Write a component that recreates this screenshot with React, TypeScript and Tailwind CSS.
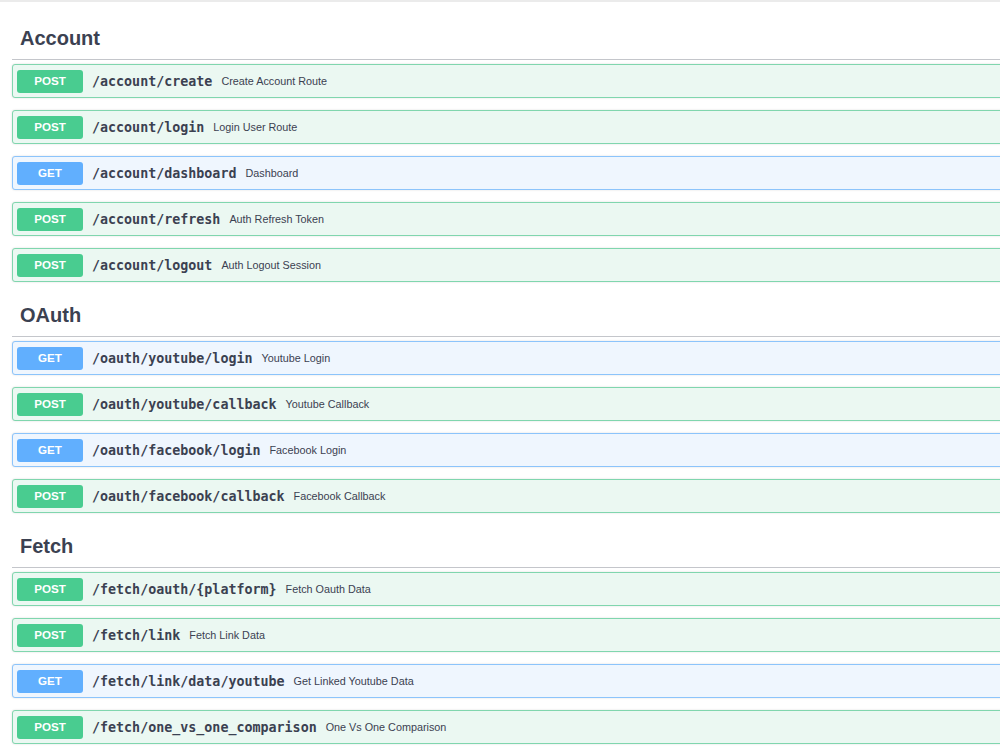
import React from 'react'

type Op = { method: 'GET' | 'POST'; path: string; summary: string }

const sections: { tag: string; ops: Op[] }[] = [
  {
    tag: 'Account',
    ops: [
      { method: 'POST', path: '/account/create', summary: 'Create Account Route' },
      { method: 'POST', path: '/account/login', summary: 'Login User Route' },
      { method: 'GET', path: '/account/dashboard', summary: 'Dashboard' },
      { method: 'POST', path: '/account/refresh', summary: 'Auth Refresh Token' },
      { method: 'POST', path: '/account/logout', summary: 'Auth Logout Session' },
    ],
  },
  {
    tag: 'OAuth',
    ops: [
      { method: 'GET', path: '/oauth/youtube/login', summary: 'Youtube Login' },
      { method: 'POST', path: '/oauth/youtube/callback', summary: 'Youtube Callback' },
      { method: 'GET', path: '/oauth/facebook/login', summary: 'Facebook Login' },
      { method: 'POST', path: '/oauth/facebook/callback', summary: 'Facebook Callback' },
    ],
  },
  {
    tag: 'Fetch',
    ops: [
      { method: 'POST', path: '/fetch/oauth/{platform}', summary: 'Fetch Oauth Data' },
      { method: 'POST', path: '/fetch/link', summary: 'Fetch Link Data' },
      { method: 'GET', path: '/fetch/link/data/youtube', summary: 'Get Linked Youtube Data' },
      { method: 'POST', path: '/fetch/one_vs_one_comparison', summary: 'One Vs One Comparison' },
    ],
  },
]

function OpBlock({ op }: { op: Op }) {
  const isGet = op.method === 'GET'
  return (
    <div
      className={
        isGet
          ? 'mb-[12px] flex h-[34px] items-center rounded-[3px] border border-[#8cc4fb] bg-[#eff6fe] pl-[4px] shadow-[0_0_2px_rgba(0,0,0,0.15)]'
          : 'mb-[12px] flex h-[34px] items-center rounded-[3px] border border-[#80d6ae] bg-[#ebf8f2] pl-[4px] shadow-[0_0_2px_rgba(0,0,0,0.15)]'
      }
    >
      <span
        className={
          isGet
            ? 'flex h-[23px] w-[66px] items-center justify-center rounded-[3px] bg-[#61affe] text-[11.6px] font-bold text-white'
            : 'flex h-[23px] w-[66px] items-center justify-center rounded-[3px] bg-[#49cc90] text-[11.6px] font-bold text-white'
        }
      >
        {op.method}
      </span>
      <span className="ml-[9px] pt-[1px] font-['DejaVu_Sans_Mono',monospace] text-[13.33px] font-bold text-[#3b4151]">
        {op.path}
      </span>
      <span className="ml-[9px] text-[10.8px] text-[#3b4151]">{op.summary}</span>
    </div>
  )
}

export default function App() {
  return (
    <div className="h-[749px] w-[1000px] overflow-hidden bg-white font-['Liberation_Sans',Arial,sans-serif]">
      <div className="h-[2px] bg-[#ebebeb]" />
      <div className="w-[1020px] pl-[12px] pt-[15px]">
        {sections.map((s) => (
          <div key={s.tag}>
            <div className="flex h-[43px] items-center border-b border-[#c4c6cb] pl-[8px]">
              <h3 className="text-[20px] font-bold text-[#3b4151]">{s.tag}</h3>
            </div>
            <div className="pt-[4px]">
              {s.ops.map((op) => (
                <OpBlock key={op.path} op={op} />
              ))}
            </div>
          </div>
        ))}
      </div>
    </div>
  )
}
